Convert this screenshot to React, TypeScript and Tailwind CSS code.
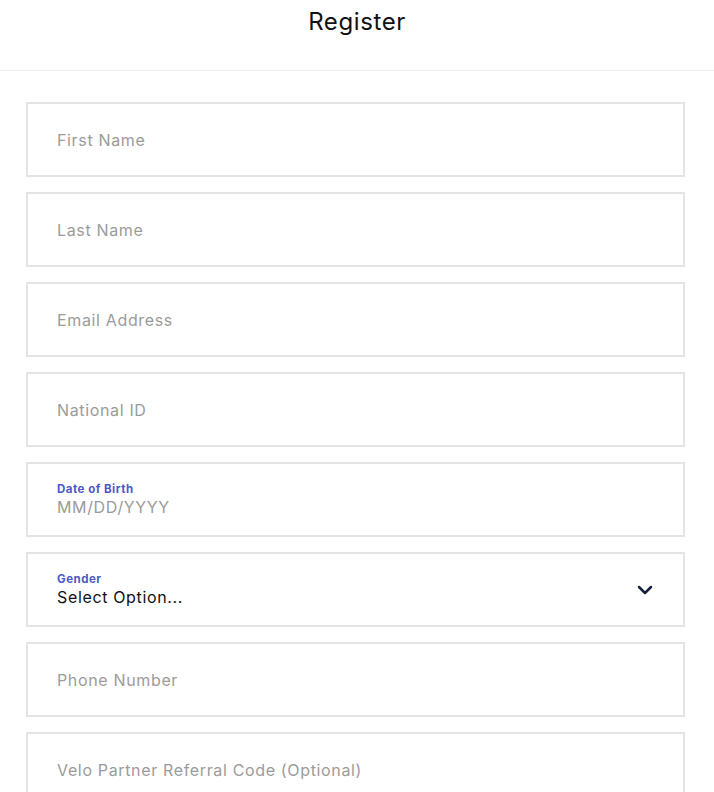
import { ChevronDown } from "lucide-react";

type Field =
  | { kind: "text"; placeholder: string }
  | { kind: "labeled"; label: string; value: string; filled?: boolean; select?: boolean };

const fields: Field[] = [
  { kind: "text", placeholder: "First Name" },
  { kind: "text", placeholder: "Last Name" },
  { kind: "text", placeholder: "Email Address" },
  { kind: "text", placeholder: "National ID" },
  { kind: "labeled", label: "Date of Birth", value: "MM/DD/YYYY" },
  { kind: "labeled", label: "Gender", value: "Select Option...", filled: true, select: true },
  { kind: "text", placeholder: "Phone Number" },
  { kind: "text", placeholder: "Velo Partner Referral Code (Optional)" },
];

export default function App() {
  return (
    <div className="min-h-screen bg-white font-['Inter',sans-serif] text-[#111]">
      {/* Header */}
      <div className="h-[71px] border-b border-[#ededed] flex justify-center pt-[6px]">
        <h1 className="text-[24px] leading-[32px] font-normal text-[#111] tracking-[0.6px]">Register</h1>
      </div>

      <form className="pl-[26px] pr-[29px] pt-[31px] flex flex-col gap-[15px]">
        {fields.map((f, i) => (
          <div
            key={i}
            className="h-[75px] border-2 border-[#e4e4e4] bg-white flex items-center pl-[29px] pr-[26px]"
          >
            {f.kind === "text" ? (
              <span className="text-[16px] tracking-[0.65px] text-[#9b9b9b]">{f.placeholder}</span>
            ) : (
              <>
                <div className="flex-1 flex flex-col">
                  <span className="text-[11.5px] leading-[14px] font-bold tracking-[0.5px] text-[#4b59c6]">
                    {f.label}
                  </span>
                  <span
                    className={`text-[16px] leading-[22px] tracking-[0.65px] ${f.filled ? "text-[#111]" : "text-[#9b9b9b]"}`}
                  >
                    {f.value}
                  </span>
                </div>
                {f.select && (
                  <ChevronDown size={24} strokeWidth={2.5} className="text-[#16203a]" />
                )}
              </>
            )}
          </div>
        ))}
      </form>
    </div>
  );
}
